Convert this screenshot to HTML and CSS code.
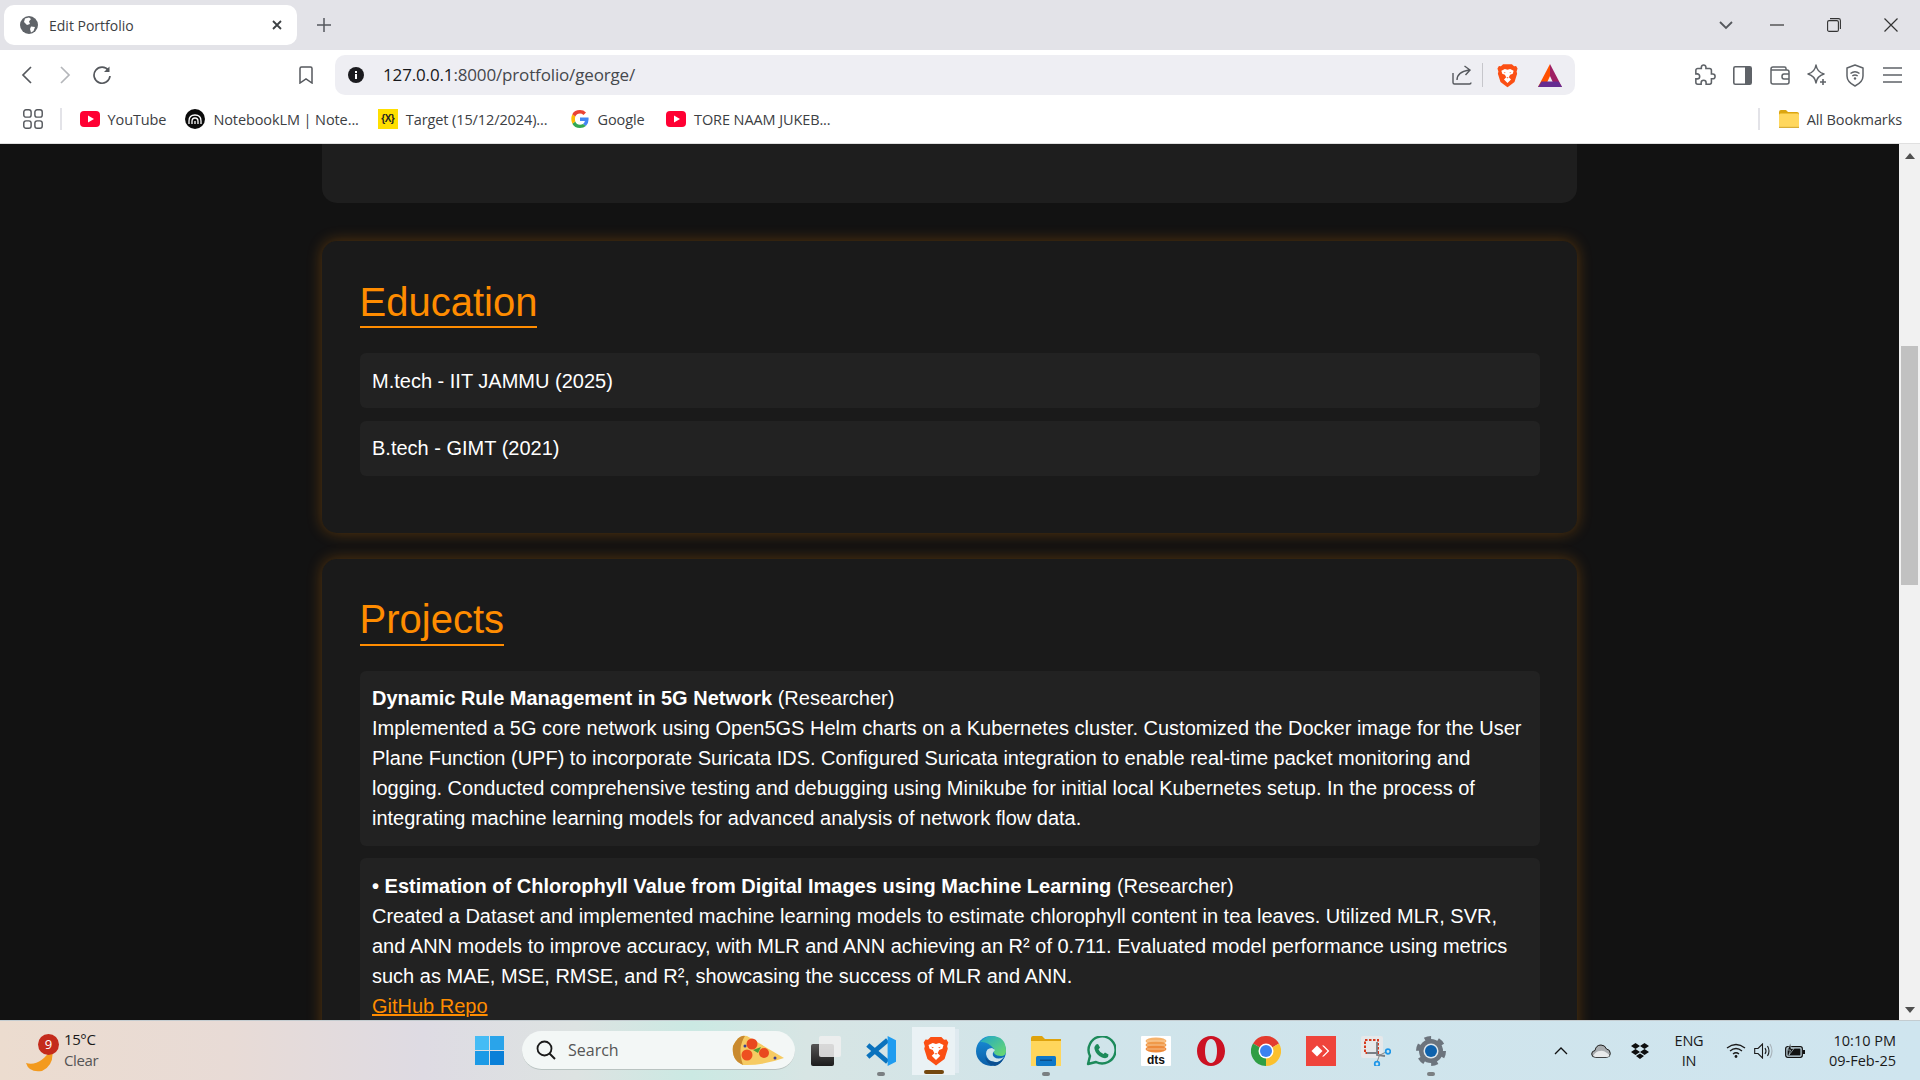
FILE: index.html
```html
<!DOCTYPE html>
<html lang="en">
<head>
    <meta charset="UTF-8">
    <meta name="viewport" content="width=device-width, initial-scale=1.0">
    <title>Edit Portfolio</title>
    <link rel="stylesheet" href="styles.css">
</head>
<body>
    <svg class="sprite" width="0" height="0">
        <symbol id="yt" viewBox="0 0 20 20">
            <rect x="0" y="2" width="20" height="16" rx="4" fill="#ff0033"/>
            <path d="M8 6.5 14 10 8 13.5Z" fill="#fff"/>
        </symbol>
        <symbol id="brave" viewBox="0 0 24 28">
            <path d="M7 1H17L19.5 3.5 21.8 3.2 23.5 6 22.4 9.5 23 12 20 21.5 14 26 12 27.5 10 26 4 21.5 1 12 1.6 9.5 .5 6 2.2 3.2 4.5 3.5Z" fill="#fb4f14"/>
            <path d="M5 8.5 9 6.5 12 7.5 15 6.5 19 8.5 18 12 15 13 13.5 16 16 18.5 12 22.5 8 18.5 10.5 16 9 13 6 12Z" fill="#fff"/>
            <path d="M7.5 10 10 10.8 9 11.5ZM16.5 10 14 10.8 15 11.5ZM10.8 16H13.2L12 17.5Z" fill="#fb4f14"/>
        </symbol>
        <symbol id="win" viewBox="0 0 29 29">
            <rect width="14" height="14" fill="#45bcf5"/>
            <rect x="15" width="14" height="14" fill="#2aa4ea"/>
            <rect y="15" width="14" height="14" fill="#1c9ae6"/>
            <rect x="15" y="15" width="14" height="14" fill="#0a80d8"/>
        </symbol>
    </svg>

    <div class="tabstrip">
        <div class="tab">
            <svg width="18" height="18" viewBox="0 0 18 18">
                <circle cx="9" cy="9" r="9" fill="#5f6368"/>
                <path d="M5 2.5 9 1.5 11 3 9 5.5 10 8 7 9 4 6ZM11 10.5 15 11 13.5 15 11 16.5 10 13Z" fill="#fff"/>
            </svg>
            <span class="tab-title">Edit Portfolio</span>
            <svg class="tab-close" width="10" height="10" viewBox="0 0 10 10">
                <path d="M1 1 9 9M9 1 1 9" stroke="#3c4043" stroke-width="1.8"/>
            </svg>
        </div>
        <svg class="new-tab" width="14" height="14" viewBox="0 0 14 14">
            <path d="M7 0V14M0 7H14" stroke="#55585d" stroke-width="1.5"/>
        </svg>
        <svg class="tab-list" width="14" height="9" viewBox="0 0 14 9">
            <path d="M1 1 7 7 13 1" fill="none" stroke="#55585d" stroke-width="1.8"/>
        </svg>
        <div class="win-btn">
            <svg width="14" height="2" viewBox="0 0 14 2"><path d="M0 1H14" stroke="#333" stroke-width="1.2"/></svg>
        </div>
        <div class="win-btn">
            <svg width="14" height="14" viewBox="0 0 14 14">
                <rect x=".6" y="2.6" width="10.8" height="10.8" rx="1.5" fill="none" stroke="#333" stroke-width="1.1"/>
                <path d="M3 .6H11.5Q13.4 .6 13.4 2.5V11" fill="none" stroke="#333" stroke-width="1.1"/>
            </svg>
        </div>
        <div class="win-btn">
            <svg width="14" height="14" viewBox="0 0 14 14"><path d="M.5 .5 13.5 13.5M13.5 .5 .5 13.5" stroke="#333" stroke-width="1.2"/></svg>
        </div>
    </div>

    <div class="toolbar">
        <div class="tool-btn">
            <svg width="12" height="18" viewBox="0 0 12 18"><path d="M10 1 2 9 10 17" fill="none" stroke="#55585d" stroke-width="1.7"/></svg>
        </div>
        <div class="tool-btn">
            <svg width="12" height="18" viewBox="0 0 12 18"><path d="M2 1 10 9 2 17" fill="none" stroke="#b4b6ba" stroke-width="1.7"/></svg>
        </div>
        <div class="tool-btn reload-btn">
            <svg width="20" height="20" viewBox="0 0 20 20">
                <path d="M16.5 5.5A8 8 0 1 0 18 11" fill="none" stroke="#55585d" stroke-width="1.7"/>
                <path d="M17.5 1.5V7H12Z" fill="#55585d"/>
            </svg>
        </div>
        <div class="tool-btn bookmark-btn">
            <svg width="14" height="18" viewBox="0 0 14 18"><path d="M1 2.5Q1 1 2.5 1H11.5Q13 1 13 2.5V17L7 13 1 17Z" fill="none" stroke="#55585d" stroke-width="1.5"/></svg>
        </div>
        <div class="omnibox">
            <svg width="16" height="16" viewBox="0 0 16 16">
                <circle cx="8" cy="8" r="8" fill="#1b1b1f"/>
                <rect x="7" y="7" width="2" height="5" fill="#fff"/>
                <rect x="7" y="4" width="2" height="2" fill="#fff"/>
            </svg>
            <span class="url"><b class="host">127.0.0.1</b>:8000/protfolio/george/</span>
            <svg class="share" width="20" height="20" viewBox="0 0 20 20">
                <path d="M1 8V17.5Q1 19 2.5 19H17.5Q19 19 19 17.5" fill="none" stroke="#55585d" stroke-width="1.4"/>
                <path d="M5 15Q5 7 17 5M12.5 1 18 5 13.5 10" fill="none" stroke="#55585d" stroke-width="1.4"/>
            </svg>
            <span class="omni-sep"></span>
            <svg class="omni-brave" width="21" height="25"><use href="#brave"/></svg>
            <svg class="omni-bat" width="24" height="23" viewBox="0 0 24 23">
                <path d="M12 0 24 23H17L12 12Z" fill="#9e1f63"/>
                <path d="M12 0 0 23H7L12 12Z" fill="#ff5000"/>
                <path d="M0 23H24L20.5 17.5H3.5Z" fill="#662d91"/>
            </svg>
        </div>
        <div class="tool-group">
            <div class="ext-btn">
                <svg width="22" height="22" viewBox="0 0 24 24"><path d="M20.5 11H19V7c0-1.1-.9-2-2-2h-4V3.5C13 2.12 11.88 1 10.5 1S8 2.12 8 3.5V5H4c-1.1 0-1.99.9-1.99 2v3.8H3.5c1.49 0 2.7 1.21 2.7 2.7s-1.21 2.7-2.7 2.7H2V20c0 1.1.9 2 2 2h3.8v-1.5c0-1.49 1.21-2.7 2.7-2.7 1.49 0 2.7 1.21 2.7 2.7V22H17c1.1 0 2-.9 2-2v-4h1.5c1.38 0 2.5-1.12 2.5-2.5S21.88 11 20.5 11z" fill="none" stroke="#5f6368" stroke-width="1.7"/></svg>
            </div>
            <div class="ext-btn">
                <svg width="19" height="19" viewBox="0 0 19 19">
                    <rect x=".8" y=".8" width="17.4" height="17.4" rx="1.5" fill="none" stroke="#5f6368" stroke-width="1.6"/>
                    <rect x="12" y="1" width="6" height="17" fill="#5f6368"/>
                </svg>
            </div>
            <div class="ext-btn">
                <svg width="20" height="19" viewBox="0 0 20 19">
                    <path d="M16 4V2.5Q16 1 14.5 1H3Q1 1 1 3V16Q1 18 3 18H17Q19 18 19 16V6Q19 4 17 4H1" fill="none" stroke="#5f6368" stroke-width="1.5"/>
                    <path d="M19 8H14Q12 8 12 10.5 12 13 14 13H19" fill="none" stroke="#5f6368" stroke-width="1.5"/>
                </svg>
            </div>
            <div class="ext-btn">
                <svg width="20" height="22" viewBox="0 0 20 22">
                    <path d="M9 1Q10 8 17 10 10 12 9 19 8 12 1 10 8 8 9 1Z" fill="none" stroke="#5f6368" stroke-width="1.5" stroke-linejoin="round"/>
                    <path d="M16 15V21M13 18H19" stroke="#5f6368" stroke-width="1.6"/>
                </svg>
            </div>
            <div class="ext-btn">
                <svg width="18" height="23" viewBox="0 0 18 23">
                    <path d="M9 1 17 4V12Q17 18 9 22 1 18 1 12V4Z" fill="none" stroke="#5f6368" stroke-width="1.5" stroke-linejoin="round"/>
                    <path d="M4.5 9.5Q9 6 13.5 9.5M6.3 12Q9 10 11.7 12" fill="none" stroke="#5f6368" stroke-width="1.5"/>
                    <circle cx="9" cy="14.5" r="1.2" fill="#5f6368"/>
                </svg>
            </div>
            <div class="ext-btn">
                <svg width="19" height="16" viewBox="0 0 19 16"><path d="M0 1H19M0 8H19M0 15H19" stroke="#5f6368" stroke-width="1.7"/></svg>
            </div>
        </div>
    </div>

    <div class="bookmarks">
        <svg class="apps" width="20" height="20" viewBox="0 0 18 18">
            <g fill="none" stroke="#55585d" stroke-width="1.3">
                <rect x=".7" y=".7" width="6.6" height="6.6" rx="2"/>
                <rect x="10.7" y=".7" width="6.6" height="6.6" rx="2"/>
                <rect x=".7" y="10.7" width="6.6" height="6.6" rx="2"/>
                <rect x="10.7" y="10.7" width="6.6" height="6.6" rx="2"/>
            </g>
        </svg>
        <span class="bm-sep"></span>
        <a class="bm"><svg width="20" height="20"><use href="#yt"/></svg>YouTube</a>
        <a class="bm">
            <svg width="20" height="20" viewBox="0 0 20 20">
                <circle cx="10" cy="10" r="10" fill="#0b0b0b"/>
                <path d="M4 15V12Q4 6 10 6 16 6 16 12V15M7 15V12.5Q7 9 10 9 13 9 13 12.5V15M10 15V12" fill="none" stroke="#fff" stroke-width="1.3"/>
            </svg>NotebookLM | Note...
        </a>
        <a class="bm">
            <span class="target-icon">{X}</span>Target (15/12/2024)...
        </a>
        <a class="bm bm-google">
            <svg width="18" height="18" viewBox="0 0 18 18">
                <path d="M17.6 9.2Q17.6 8.3 17.5 7.5H9V11H13.9Q13.5 12.9 12 13.9L14.9 16.1Q17.6 13.6 17.6 9.2Z" fill="#4285f4"/>
                <path d="M9 18Q12.6 18 14.9 16.1L12 13.9Q10.8 14.7 9 14.7 5.6 14.7 4.3 11.5L1.3 13.8Q3.5 18 9 18Z" fill="#34a853"/>
                <path d="M4.3 11.5Q3.6 9 4.3 6.5L1.3 4.2Q-.7 9 1.3 13.8Z" fill="#fbbc05"/>
                <path d="M9 3.6Q11 3.6 12.5 5L15 2.4Q12.6 0 9 0 3.5 0 1.3 4.2L4.3 6.5Q5.6 3.6 9 3.6Z" fill="#ea4335"/>
            </svg>Google
        </a>
        <a class="bm"><svg width="20" height="20"><use href="#yt"/></svg>TORE NAAM JUKEB...</a>
        <span class="bm-sep bm-sep-right"></span>
        <a class="bm bm-all">
            <svg width="20" height="18" viewBox="0 0 20 18">
                <path d="M0 2Q0 0 2 0H7L9 2H18Q20 2 20 4V6H0Z" fill="#dba50f"/>
                <rect y="3.5" width="20" height="14.5" rx="1.5" fill="#ffd75e"/>
                <rect y="16.8" width="20" height="1.2" fill="#d7ad3a"/>
            </svg>All Bookmarks
        </a>
    </div>

    <div class="viewport">
        <main class="page">
            <section class="card card-cut"></section>

            <section class="card">
                <h2 class="card-title">Education</h2>
                <div class="item">M.tech - IIT JAMMU (2025)</div>
                <div class="item">B.tech - GIMT (2021)</div>
            </section>

            <section class="card">
                <h2 class="card-title">Projects</h2>
                <div class="item">
                    <strong>Dynamic Rule Management in 5G Network</strong> (Researcher)<br>
                    Implemented a 5G core network using Open5GS Helm charts on a Kubernetes cluster. Customized the Docker image for the User Plane Function (UPF) to incorporate Suricata IDS. Configured Suricata integration to enable real-time packet monitoring and logging. Conducted comprehensive testing and debugging using Minikube for initial local Kubernetes setup. In the process of integrating machine learning models for advanced analysis of network flow data.
                </div>
                <div class="item">
                    <strong>• Estimation of Chlorophyll Value from Digital Images using Machine Learning</strong> (Researcher)<br>
                    Created a Dataset and implemented machine learning models to estimate chlorophyll content in tea leaves. Utilized MLR, SVR, and ANN models to improve accuracy, with MLR and ANN achieving an R² of 0.711. Evaluated model performance using metrics such as MAE, MSE, RMSE, and R², showcasing the success of MLR and ANN.<br>
                    <a class="repo-link" href="#">GitHub Repo</a>
                </div>
            </section>
        </main>
        <div class="scrollbar">
            <svg class="arrow" width="10" height="6" viewBox="0 0 10 6"><path d="M5 0 10 6H0Z" fill="#505050"/></svg>
            <div class="thumb"></div>
            <svg class="arrow arrow-down" width="10" height="6" viewBox="0 0 10 6"><path d="M0 0H10L5 6Z" fill="#505050"/></svg>
        </div>
    </div>

    <footer class="taskbar">
        <div class="weather">
            <div class="weather-icon">
                <svg width="29" height="27" viewBox="0 0 29 27">
                    <path d="M26 3Q29 20 16 26 3 28 0 18 14 22 26 3Z" fill="#f39a1e"/>
                </svg>
                <span class="badge">9</span>
            </div>
            <div class="weather-text">
                <span>15°C</span>
                <span class="weather-sub">Clear</span>
            </div>
        </div>
        <svg class="start" width="29" height="29"><use href="#win"/></svg>
        <div class="search">
            <svg width="20" height="20" viewBox="0 0 20 20">
                <circle cx="8.5" cy="8.5" r="7" fill="none" stroke="#1a1a1a" stroke-width="1.8"/>
                <path d="M13.5 13.5 19 19" stroke="#1a1a1a" stroke-width="2"/>
            </svg>
            <span class="search-label">Search</span>
            <svg class="pizza" width="54" height="32" viewBox="0 0 54 32">
                <path d="M2 12Q8 0 16 2L53 24Q30 32 12 31 0 26 2 12Z" fill="#f6cb62"/>
                <path d="M2 12Q8 0 14 2 6 14 12 31 0 26 2 12Z" fill="#c98a2e"/>
                <circle cx="21" cy="10" r="5.5" fill="#e9481f"/>
                <circle cx="16" cy="21" r="5.5" fill="#ee5020"/>
                <circle cx="33" cy="19" r="5" fill="#e9481f"/>
                <path d="M22 16 30 13 27 19Z" fill="#4d9e3a"/>
                <circle cx="44" cy="24" r="1.5" fill="#3d3f8f"/>
                <circle cx="14" cy="12" r="1.5" fill="#3d3f8f"/>
            </svg>
        </div>

        <div class="task-view">
            <span class="tv-back"></span>
            <span class="tv-front"></span>
        </div>

        <div class="app running">
            <svg width="30" height="30" viewBox="0 0 100 100">
                <path d="M6 70 72 14M6 30 72 86" stroke="#0a72bd" stroke-width="16"/>
                <path d="M72 0 100 14V86L72 100Z" fill="#1f9cf0"/>
            </svg>
        </div>
        <div class="app active">
            <svg width="26" height="30"><use href="#brave"/></svg>
        </div>
        <div class="app">
            <svg width="30" height="30" viewBox="0 0 30 30">
                <defs>
                    <linearGradient id="edge-blue" x1="0" y1="0" x2="0" y2="1">
                        <stop offset="0" stop-color="#1a8fd8"/>
                        <stop offset="1" stop-color="#0b5ea8"/>
                    </linearGradient>
                    <linearGradient id="edge-green" x1="0" y1="0" x2="1" y2="1">
                        <stop offset="0" stop-color="#1fa6c9"/>
                        <stop offset="1" stop-color="#6fdc6a"/>
                    </linearGradient>
                </defs>
                <circle cx="15" cy="15" r="15" fill="url(#edge-blue)"/>
                <path d="M4 6Q10 0 15 0 30 0 30 15 30 20 25 20 16 20 18 13 12 5 4 6Z" fill="url(#edge-green)"/>
                <path d="M16 12Q10 12 10 18 11 25 19 26 24 27 28 21 22 24 18 21 15 18 19 14Z" fill="#cfe3ec"/>
                <path d="M19 30Q10 29 9 20 10 25 19 26 24 27 28 21 25 29 19 30Z" fill="#0a4f91"/>
            </svg>
        </div>
        <div class="app running">
            <svg width="30" height="30" viewBox="0 0 30 30">
                <path d="M0 2Q0 0 2 0H11L14 3H30V14H0Z" fill="#dfa30d"/>
                <rect y="5" width="30" height="25" fill="#ffd65c"/>
                <rect x="5" y="20" width="20" height="10" rx="1.5" fill="#0f78c9"/>
                <rect x="9" y="23.5" width="12" height="1.5" fill="#0b4f8c"/>
            </svg>
        </div>
        <div class="app">
            <svg width="30" height="30" viewBox="0 0 30 30">
                <path d="M2 28 4 20A13.5 13.5 0 1 1 10 26Z" fill="none" stroke="#1c8a5a" stroke-width="2.4" stroke-linejoin="round"/>
                <path d="M10 8.5 12 8 14 11.5 12.5 13.5Q14 17 17.5 18L19 16.5 22.5 18.5 22 21Q20 23 16 21.5 10 19 8.5 13 8 10.5 10 8.5Z" fill="#1c8a5a"/>
            </svg>
        </div>
        <div class="app">
            <svg width="30" height="30" viewBox="0 0 30 30">
                <rect width="30" height="30" rx="1" fill="#fff"/>
                <ellipse cx="15" cy="5" rx="10.5" ry="3.5" fill="#f6b26b"/>
                <ellipse cx="15" cy="9" rx="10.5" ry="3.5" fill="#f09a4a"/>
                <ellipse cx="15" cy="13" rx="10.5" ry="3.5" fill="#ee8a3a"/>
                <path d="M6 5H24M6 9H24M6 13H24" stroke="#fde3c5" stroke-width=".6"/>
                <text class="dts-text" x="15" y="27.5" text-anchor="middle">dts</text>
            </svg>
        </div>
        <div class="app">
            <svg width="30" height="30" viewBox="0 0 30 30">
                <path fill-rule="evenodd" d="M15 0C23 0 29 6.5 29 15S23 30 15 30 1 23.5 1 15 7 0 15 0ZM15 3C11 3 9 8.5 9 15S11 27 15 27 21 21.5 21 15 19 3 15 3Z" fill="#cc1223"/>
            </svg>
        </div>
        <div class="app">
            <svg width="30" height="30" viewBox="0 0 30 30">
                <path d="M15 15 2 7.5A15 15 0 0 1 28 7.5Z" fill="#e33b2e"/>
                <path d="M15 15 28 7.5A15 15 0 0 1 15 30Z" fill="#fbc02d"/>
                <path d="M15 15 15 30A15 15 0 0 1 2 7.5Z" fill="#2f9e44"/>
                <circle cx="15" cy="15" r="7.5" fill="#fff"/>
                <circle cx="15" cy="15" r="6" fill="#3b82f0"/>
            </svg>
        </div>
        <div class="app">
            <svg width="30" height="30" viewBox="0 0 30 30">
                <rect width="30" height="30" fill="#ef443b"/>
                <path d="M11 9.5 16.5 15 11 20.5 5.5 15Z" fill="#fff"/>
                <path d="M16 9.5 17.8 9.5 23.3 15 17.8 20.5 16 20.5 21.5 15Z" fill="#fff"/>
            </svg>
        </div>
        <div class="app">
            <svg width="30" height="30" viewBox="0 0 30 30">
                <rect width="22" height="22" rx="2" fill="#e6e8ea"/>
                <rect x="4" y="4" width="13" height="13" fill="none" stroke="#d63b1f" stroke-width="2" stroke-dasharray="2.5 1.5"/>
                <path d="M16 6V19L24 20M6 17H17" fill="none" stroke="#7a7f85" stroke-width="1.8"/>
                <path d="M17 20 25 16M19 18 16 26" stroke="#888" stroke-width="1"/>
                <circle cx="27" cy="15.5" r="2.3" fill="none" stroke="#1e96e8" stroke-width="1.7"/>
                <circle cx="16" cy="28" r="2.3" fill="none" stroke="#1e96e8" stroke-width="1.7"/>
            </svg>
        </div>
        <div class="app running">
            <svg width="30" height="30" viewBox="0 0 30 30">
                <circle cx="15" cy="15" r="12" fill="#6c747d"/>
                <circle cx="15" cy="15" r="12" fill="none" stroke="#6c747d" stroke-width="6" stroke-dasharray="6 6.57"/>
                <circle cx="15" cy="15" r="7.5" fill="#dde6ec"/>
                <circle cx="15" cy="15" r="6" fill="#0f62ac"/>
            </svg>
        </div>

        <div class="tray">
            <div class="tray-cell tc-40">
                <svg width="14" height="8" viewBox="0 0 14 8"><path d="M1 7 7 1 13 7" fill="none" stroke="#111" stroke-width="1.3"/></svg>
            </div>
            <div class="tray-cell tc-40">
                <svg width="20" height="14" viewBox="0 0 20 14">
                    <path d="M4.5 13.3Q.7 13.3 .7 10 .7 7 4 6.5 5 1 10 1 14 1 15.5 5 19.3 5.5 19.3 9.5 19.3 13.3 15.5 13.3Z" fill="#a9adb0" stroke="#1e1e1e" stroke-width="1"/>
                    <path d="M2 12Q5 7 9 7 12 6 16 9 18 10 18.5 11.5 18 13 15.5 13H4.5Z" fill="#e8eaeb"/>
                </svg>
            </div>
            <div class="tray-cell tc-38">
                <svg width="18" height="16" viewBox="0 0 18 16">
                    <path d="M4.5 0 9 3 4.5 6 0 3ZM13.5 0 18 3 13.5 6 9 3ZM4.5 6 9 9 4.5 12 0 9ZM13.5 6 18 9 13.5 12 9 9ZM9 10.5 13 13 9 16 5 13Z" fill="#0e0e0e"/>
                </svg>
            </div>
            <div class="tray-cell tc-60 lang">ENG<br>IN</div>
            <div class="tray-cell tc-34">
                <svg width="20" height="15" viewBox="0 0 20 15">
                    <path d="M1 5Q10 -2 19 5M4 8Q10 3 16 8M7 11Q10 8.5 13 11" fill="none" stroke="#1a1a1a" stroke-width="1.3"/>
                    <circle cx="10" cy="13.5" r="1.4" fill="#1a1a1a"/>
                </svg>
            </div>
            <div class="tray-cell tc-22">
                <svg width="20" height="16" viewBox="0 0 20 16">
                    <path d="M.7 5.5H4L8.5 1V15L4 10.5H.7Z" fill="none" stroke="#1a1a1a" stroke-width="1.1"/>
                    <path d="M11 5Q13 8 11 11M13.5 3Q16.5 8 13.5 13" fill="none" stroke="#1a1a1a" stroke-width="1.1"/>
                    <path d="M16 1Q20 8 16 15" fill="none" stroke="#a9b4ba" stroke-width="1.1"/>
                </svg>
            </div>
            <div class="tray-cell tc-40">
                <svg width="20" height="18" viewBox="0 0 20 16">
                    <rect x=".7" y="3.7" width="16.6" height="10.6" rx="2" fill="none" stroke="#111" stroke-width="1.3"/>
                    <rect x="2.5" y="5.5" width="13" height="7" fill="#111"/>
                    <rect x="18" y="7" width="2" height="4" fill="#111"/>
                    <path d="M5.5 0 2.5 7H5.5L4 12 9 5.5H6Z" fill="#111" stroke="#d2e6ef" stroke-width=".6"/>
                </svg>
            </div>
            <div class="clock">10:10 PM<br>09-Feb-25</div>
        </div>
    </footer>
</body>
</html>
```

FILE: styles.css
```css
* { box-sizing: border-box; }

html, body {
    margin: 0;
    height: 100%;
}

body {
    display: flex;
    flex-direction: column;
    height: 1080px;
    overflow: hidden;
    font-family: "Liberation Sans", Arial, sans-serif;
    background: #121212;
}

svg { display: block; flex-shrink: 0; }
.sprite { display: none; }

/* browser chrome */
.tabstrip {
    display: flex;
    align-items: center;
    height: 50px;
    padding: 5px 1px 5px 4px;
    background: #e3e3e8;
}
.tab {
    display: flex;
    align-items: center;
    width: 293px;
    height: 40px;
    padding: 0 15px 0 16px;
    border-radius: 10px;
    background: #fff;
}
.tab-title {
    margin-left: 11px;
    flex: 1;
    font: 14px "Open Sans", sans-serif;
    color: #3c4043;
}
.new-tab { margin-left: 20px; }
.tab-list { margin-left: auto; margin-right: 15px; }
.win-btn {
    display: flex;
    align-items: center;
    justify-content: center;
    width: 57px;
    height: 40px;
}

.toolbar {
    display: flex;
    align-items: center;
    height: 50px;
    padding-left: 8px;
    background: #fff;
}
.tool-btn {
    display: flex;
    align-items: center;
    justify-content: center;
    width: 38px;
    height: 38px;
}
.reload-btn { padding-right: 2px; }
.bookmark-btn { margin-left: 165px; }
.omnibox {
    display: flex;
    align-items: center;
    width: 1240px;
    height: 40px;
    margin-left: 10px;
    padding-left: 13px;
    border-radius: 10px;
    background: #eeeef3;
}
.url {
    margin-left: 19px;
    margin-bottom: 2px;
    flex: 1;
    font: 17px "Open Sans", sans-serif;
    letter-spacing: -0.15px;
    color: #45484d;
}
.host { font-weight: 400; color: #17181b; }
.omni-sep {
    width: 1px;
    height: 24px;
    margin-left: 10px;
    background: #c6c6cb;
}
.omni-brave { margin-left: 14px; }
.omni-bat { margin: 0 13px 0 20px; }
.tool-group {
    display: flex;
    margin-left: auto;
    padding-right: 9px;
}
.ext-btn {
    display: flex;
    align-items: center;
    justify-content: center;
    width: 37.5px;
    height: 38px;
}

.bookmarks {
    display: flex;
    align-items: center;
    height: 44px;
    padding: 0 0 5px 23px;
    border-bottom: 1px solid #e0e0e0;
    background: #fff;
}
.apps { margin-right: 17px; }
.bm-sep {
    width: 2px;
    height: 22px;
    margin-right: 8px;
    background: #e3e3e8;
}
.bm-sep-right { margin-left: auto; margin-right: 9px; }
.bm {
    display: flex;
    align-items: center;
    gap: 8px;
    padding: 0 9.5px;
    font: 14.5px "Open Sans", sans-serif;
    letter-spacing: -0.1px;
    color: #3c4043;
    white-space: nowrap;
}
.bm-google {
    margin-left: 5px;
    padding-right: 12px;
}
.bm-all { padding-right: 18px; }
.target-icon {
    width: 20px;
    height: 20px;
    font: bold 10px/20px "Liberation Sans", sans-serif;
    letter-spacing: -0.5px;
    text-align: center;
    color: #222;
    background: #ffdf00;
}

/* page area */
.viewport {
    display: flex;
    flex: 1;
    min-height: 0;
}
.page {
    flex: 1;
    min-width: 0;
    overflow: hidden;
    color: #fff;
    font-size: 20px;
    line-height: 30px;
}
.card {
    width: 1255px;
    margin: 0 auto 26px;
    padding: 37.5px 37.5px 44.5px;
    border-radius: 15px;
    background: #1a1a1a;
    box-shadow: 0 0 15px rgba(255, 140, 0, 0.3);
}
.card-cut {
    height: 59px;
    margin-bottom: 38px;
    padding: 0;
    border-radius: 0 0 15px 15px;
    background: #1e1e1e;
    box-shadow: none;
}
.card-title {
    display: inline-block;
    margin: 0 0 25px;
    font-size: 40px;
    font-weight: 400;
    line-height: 47.5px;
    color: #ff8c00;
    border-bottom: 2px solid #ff8c00;
    vertical-align: top;
}
.item {
    margin-bottom: 12.5px;
    padding: 12.5px;
    border-radius: 6px;
    background: #222;
}
.repo-link { color: #ff8c00; }

.scrollbar {
    display: flex;
    flex-direction: column;
    align-items: center;
    width: 21px;
    padding-top: 9px;
    background: #f1f1f1;
}
.thumb {
    width: 17px;
    height: 239px;
    margin-top: 187px;
    background: #c1c1c1;
}
.arrow-down { margin-top: auto; margin-bottom: 7px; }

/* windows taskbar */
.taskbar {
    display: flex;
    align-items: center;
    height: 60px;
    border-top: 1px solid #c4ccd0;
    background: linear-gradient(90deg, #ecdccf 0%, #e8dbd6 12%, #dedbe3 22%, #dde3e2 30%, #cbe9e3 36%, #d7e5e4 42%, #d0e4ea 55%, #cfe5ef 100%);
}
.weather {
    display: flex;
    width: 475px;
    padding-left: 26px;
}
.weather-icon {
    position: relative;
    width: 38px;
    height: 46px;
}
.weather-icon svg { margin-top: 17px; }
.badge {
    position: absolute;
    top: 6px;
    left: 12px;
    width: 21px;
    height: 21px;
    border-radius: 50%;
    font: 13px/21px "Open Sans", sans-serif;
    text-align: center;
    color: #fff;
    background: #c42b1c;
}
.weather-text {
    display: flex;
    flex-direction: column;
    font: 15px/21px "Open Sans", sans-serif;
    letter-spacing: -0.4px;
    color: #1a1a1a;
    padding-top: 1px;
}
.weather-sub { color: #555; }

.search {
    display: flex;
    align-items: center;
    width: 273px;
    height: 39px;
    margin-left: 18px;
    padding: 0 10px 0 14px;
    border-radius: 20px;
    background: #f3f7f6;
    border-bottom: 1px solid #b9c3c1;
}
.search-label {
    margin-left: 12px;
    flex: 1;
    font: 16px "Open Sans", sans-serif;
    color: #555;
}

.task-view {
    position: relative;
    width: 58px;
    height: 30px;
}
.tv-back {
    position: absolute;
    left: 16px;
    top: 8px;
    width: 23px;
    height: 22px;
    border-radius: 2px;
    background: linear-gradient(#555, #1c1c1c);
}
.tv-front {
    position: absolute;
    left: 24px;
    top: 0;
    width: 22px;
    height: 21px;
    border-radius: 2px;
    background: rgba(240, 240, 240, 0.85);
}

.app {
    position: relative;
    display: flex;
    align-items: center;
    justify-content: center;
    width: 55px;
    height: 48px;
}
.app.running::after,
.app.active::after {
    content: "";
    position: absolute;
    bottom: -1px;
    left: 50%;
    width: 8px;
    height: 4px;
    margin-left: -4px;
    border-radius: 2px;
    background: #7a7f82;
}
.app.active {
    background: linear-gradient(#eaf2f5, #eaf2f5) 4px 0 / 43px 48px no-repeat,
                linear-gradient(#dfeaf0, #dfeaf0) 47px 2px / 4px 44px no-repeat;
}
.app.active::after {
    width: 20px;
    margin-left: -12px;
    bottom: 1px;
    background: #74480f;
}
.dts-text {
    font: bold 12px "Liberation Sans", sans-serif;
    fill: #111;
}

.tray {
    display: flex;
    align-items: center;
    margin-left: auto;
    padding-right: 24px;
}
.tray-cell {
    display: flex;
    align-items: center;
    justify-content: center;
}
.tc-40 { width: 40px; }
.tc-38 { width: 38px; }
.tc-60 { width: 60px; }
.tc-34 { width: 34px; }
.tc-22 { width: 22px; }
.lang {
    text-align: center;
    font: 14.5px/20px "Open Sans", sans-serif;
    letter-spacing: -0.2px;
    color: #1a1a1a;
}
.clock {
    width: 81px;
    text-align: right;
    font: 14.5px/20px "Open Sans", sans-serif;
    color: #1a1a1a;
    white-space: nowrap;
}
```
